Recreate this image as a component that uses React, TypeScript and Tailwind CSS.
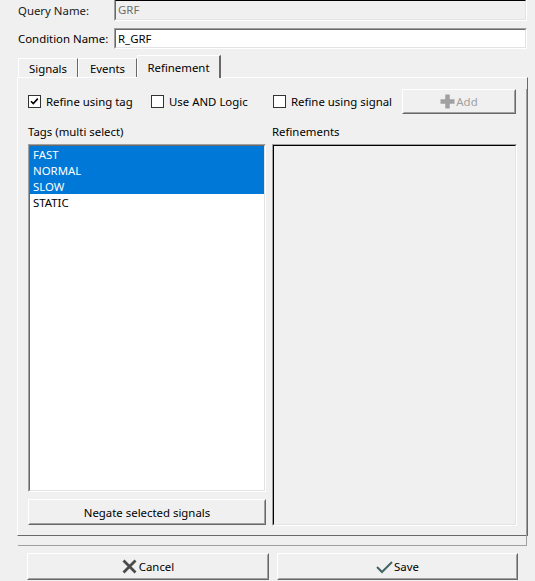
import React from "react";

function Sunken({
  className = "",
  inner = "border-t-[#696969] border-l-[#696969]",
  bg = "bg-white",
  children,
}: {
  className?: string;
  inner?: string;
  bg?: string;
  children?: React.ReactNode;
}) {
  return (
    <div
      className={`border border-t-[#a0a0a0] border-l-[#a0a0a0] border-b-white border-r-white ${className}`}
    >
      <div
        className={`w-full h-full border border-b-[#e3e3e3] border-r-[#e3e3e3] ${inner} ${bg} overflow-hidden`}
      >
        {children}
      </div>
    </div>
  );
}

function Raised({
  className = "",
  children,
}: {
  className?: string;
  children?: React.ReactNode;
}) {
  return (
    <div
      className={`border border-t-white border-l-white border-b-[#696969] border-r-[#696969] ${className}`}
    >
      <div className="w-full h-full border border-t-[#f0f0f0] border-l-[#f0f0f0] border-b-[#a0a0a0] border-r-[#a0a0a0] bg-[#f0f0f0] flex items-center justify-center">
        {children}
      </div>
    </div>
  );
}

function Check({ checked, label, w }: { checked?: boolean; label: string; w: string }) {
  return (
    <div className={`flex items-center ${w}`}>
      <div className="w-[13px] h-[13px] border border-[#333333] bg-white flex items-center justify-center shrink-0">
        {checked && (
          <svg width="11" height="11" viewBox="0 0 11 11">
            <path d="M2 5.2 L4.3 7.6 L8.8 2.6" fill="none" stroke="#000" strokeWidth="1.6" />
          </svg>
        )}
      </div>
      <span className="ml-[5px] pt-[1px]">{label}</span>
    </div>
  );
}

export default function App() {
  return (
    <div className="w-[535px] h-[581px] bg-[#f0f0f0] overflow-hidden text-[11.4px] leading-[16px] text-black font-['Noto_Sans',sans-serif]">
      {/* Query Name */}
      <div className="flex items-center h-[21px] pl-[18px] pr-[8px]">
        <div className="w-[96px] text-[#1a1a1a]">Query Name:</div>
        <Sunken
          className="flex-1 h-[21px] border-t-0"
          inner="border-t-black border-l-[#696969]"
          bg="bg-[#f0f0f0]"
        >
          <div className="pl-[2px] pt-[1px] text-[#6d6d6d]">GRF</div>
        </Sunken>
      </div>
      {/* Condition Name */}
      <div className="flex items-center h-[21px] mt-[7px] pl-[18px] pr-[8px]">
        <div className="w-[96px]">Condition Name:</div>
        <Sunken className="flex-1 h-[21px]">
          <div className="pl-[2px] pt-[1px]">R_GRF</div>
        </Sunken>
      </div>
      {/* Tabs */}
      <div className="flex items-end h-[22px] mt-[6px] pl-[18px]">
        <div className="w-[60px] h-[19px] border-t border-l border-r border-t-white border-l-white border-r-[#696969] flex items-center justify-center pt-[2px]">
          Signals
        </div>
        <div className="w-[59px] h-[19px] border-t border-l border-r border-t-white border-l-white border-r-[#696969] flex items-center justify-center pt-[2px]">
          Events
        </div>
        <div className="relative z-10 w-[84px] h-[23px] -mb-[1px] border-t border-l border-t-white border-l-white border-r-2 border-r-[#696969] bg-[#f0f0f0] flex items-start justify-center pt-[4px]">
          Refinement
        </div>
      </div>
      {/* Panel */}
      <div className="ml-[17px] w-[511px] h-[459px] border border-t-white border-l-white border-b-[#696969] border-r-[#696969]">
        <div className="w-full h-full border-r border-b border-r-[#a0a0a0] border-b-[#a0a0a0]">
          <div className="flex items-center h-[25px] mt-[11px] pl-[10px]">
            <Check checked label="Refine using tag" w="w-[123px]" />
            <Check label="Use AND Logic" w="w-[122px]" />
            <Check label="Refine using signal" w="w-[129px]" />
            <Raised className="w-[114px] h-[25px]">
              <svg width="15" height="15" viewBox="0 0 15 15" className="mr-[1px]">
                <path d="M7.5 0.5 V14.5 M0.5 7.5 H14.5" stroke="#a0a0a0" strokeWidth="4.5" />
              </svg>
              <span className="text-[#a0a0a0] pt-[1px]">Add</span>
            </Raised>
          </div>
          <div className="flex pl-[10px] mt-[9px]">
            <div className="w-[238px] flex flex-col">
              <div className="h-[16px] pt-[1px]">Tags (multi select)</div>
              <Sunken className="mt-[5px] h-[348px]">
                <div>
                  {["FAST", "NORMAL", "SLOW"].map((t) => (
                    <div key={t} className="h-[16px] bg-[#0078d7] text-white pl-[3px] pt-[1px]">
                      {t}
                    </div>
                  ))}
                  <div className="h-[16px] pl-[3px] pt-[1px]">STATIC</div>
                </div>
              </Sunken>
              <Raised className="mt-[7px] h-[26px]">
                <span className="pt-[1px]">Negate selected signals</span>
              </Raised>
            </div>
            <div className="ml-[6px] w-[245px] flex flex-col">
              <div className="h-[16px] pt-[1px]">Refinements</div>
              <Sunken
                className="mt-[5px] h-[382px]"
                inner="border-t-black border-l-black"
                bg="bg-[#f0f0f0]"
              />
            </div>
          </div>
        </div>
      </div>
      {/* Bottom buttons */}
      <div className="flex mt-[17px] pl-[27px]">
        <Raised className="w-[242px] h-[27px]">
          <svg width="15" height="15" viewBox="0 0 15 15" className="mr-[2px]">
            <path d="M1.5 1.5 L13.5 13.5 M13.5 1.5 L1.5 13.5" stroke="#4a4a4a" strokeWidth="2.8" />
          </svg>
          <span className="pt-[1px]">Cancel</span>
        </Raised>
        <Raised className="ml-[8px] w-[241px] h-[27px]">
          <svg width="17" height="14" viewBox="0 0 17 14" className="mr-[1px]">
            <path d="M1 7 L6 12 L16 2" fill="none" stroke="#456565" strokeWidth="2" />
          </svg>
          <span className="pt-[1px]">Save</span>
        </Raised>
      </div>
    </div>
  );
}
